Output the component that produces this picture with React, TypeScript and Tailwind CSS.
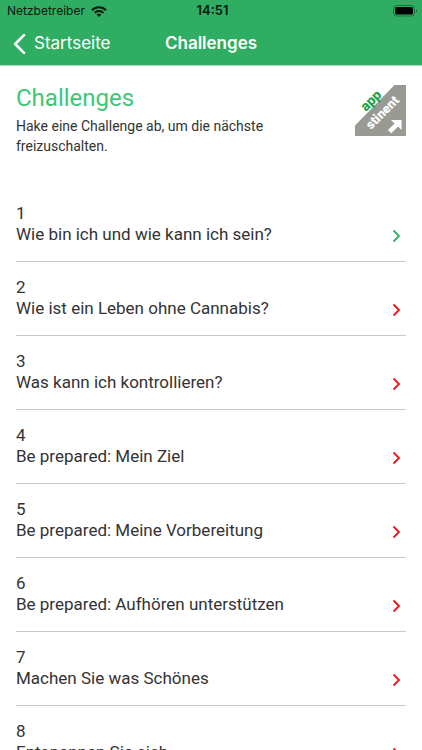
type Challenge = {
  id: number;
  title: string;
  unlocked?: boolean;
};

const challenges: Challenge[] = [
  { id: 1, title: 'Wie bin ich und wie kann ich sein?', unlocked: true },
  { id: 2, title: 'Wie ist ein Leben ohne Cannabis?' },
  { id: 3, title: 'Was kann ich kontrollieren?' },
  { id: 4, title: 'Be prepared: Mein Ziel' },
  { id: 5, title: 'Be prepared: Meine Vorbereitung' },
  { id: 6, title: 'Be prepared: Aufhören unterstützen' },
  { id: 7, title: 'Machen Sie was Schönes' },
  { id: 8, title: 'Entspannen Sie sich' },
];

const WifiIcon = () => (
  <svg className="h-[11px] w-[16px]" viewBox="0 0 16 11" fill="none" stroke="#06180c" strokeWidth="2">
    <path d="M1 4.2a10 10 0 0 1 14 0" />
    <path d="M3.6 6.9a6.2 6.2 0 0 1 8.8 0" />
    <path d="M8 11 5.6 8.6a3.4 3.4 0 0 1 4.8 0z" fill="#06180c" stroke="none" />
  </svg>
);

const BatteryIcon = () => (
  <svg className="h-[12px] w-[25px]" viewBox="0 0 25 12" role="img" aria-label="Akku voll">
    <rect x="0.5" y="0.5" width="21" height="10.5" rx="3" fill="none" stroke="#1d6e3d" />
    <rect x="2" y="2" width="18" height="7.5" rx="1.5" fill="#000" />
    <path d="M23 4a2 2 0 0 1 0 3.6z" fill="#1d6e3d" />
  </svg>
);

const StatusBar = () => (
  <div className="grid h-[22px] grid-cols-[1fr_auto_1fr] items-center pr-1 pl-[7px] font-['Inter','Liberation_Sans',sans-serif] text-[12px] text-[#06180c]">
    <div className="flex items-center gap-[6px]">
      <span>Netzbetreiber</span>
      <WifiIcon />
    </div>
    <span className="text-[13px] font-semibold">14:51</span>
    <div className="flex justify-end">
      <BatteryIcon />
    </div>
  </div>
);

const Logo = () => (
  <svg className="h-[51px] w-[51px] shrink-0" viewBox="0 0 51 51" role="img" aria-label="appstinent">
    <path d="M0 40.5 39.5 0H51v51H0z" fill="#9a9a94" />
    <g fontFamily="Roboto, 'Open Sans', sans-serif" fontWeight="900">
      <text x="11" y="27" fontSize="14" fill="#1fa650" transform="rotate(-45 11 27)">
        app
      </text>
      <text x="16" y="45" fontSize="13" fill="#fff" transform="rotate(-45 16 45)">
        stinent
      </text>
    </g>
    <path d="m33 45 3.2 3.2 6.9-6.8 3.5 3.6V35H36l3.7 3.5z" fill="#fff" />
  </svg>
);

const ChallengeRow = (props: Challenge) => (
  <li className="border-b border-[#c8c8c8]">
    <a href={`#challenge-${props.id}`} className="flex items-end justify-between pt-[15px] pb-4">
      <span className="flex flex-col text-[17px] leading-[21px]">
        <span>{props.id}</span>
        <span>{props.title}</span>
      </span>
      <svg
        className={`mr-[5px] mb-[2px] h-[14px] w-[9px] ${props.unlocked ? 'text-[#2fae63]' : 'text-[#f01414]'}`}
        viewBox="0 0 9 14"
        fill="none"
        stroke="currentColor"
        strokeWidth="1.8"
      >
        <path d="m1.5 1.5 5.5 5.5-5.5 5.5" />
      </svg>
    </a>
  </li>
);

const App = () => {
  return (
    <div className="flex h-screen flex-col bg-white font-['Roboto','Liberation_Sans',sans-serif] text-[#333]">
      <header className="shrink-0 border-b border-[#a5dcbb] bg-[#2fae63]">
        <StatusBar />
        <nav className="grid h-[43px] grid-cols-[1fr_auto_1fr] items-center px-3 font-['Inter','Liberation_Sans',sans-serif] text-[17px] text-white">
          <a href="#start" className="flex items-center gap-2">
            <svg className="h-[20px] w-[14px]" viewBox="0 0 14 20" fill="none" stroke="currentColor" strokeWidth="2.6">
              <path d="M12 1.2 3.2 10l8.8 8.8" strokeLinecap="round" strokeLinejoin="round" />
            </svg>
            Startseite
          </a>
          <span className="font-semibold">Challenges</span>
        </nav>
      </header>
      <main className="min-h-0 flex-1 overflow-y-auto px-4 pt-[19px] [scrollbar-width:none]">
        <div className="mb-8 flex items-start justify-between">
          <div className="w-[270px]">
            <h1 className="mb-1 text-[24px] leading-[27px] text-[#3cc878]">Challenges</h1>
            <p className="text-[14px] leading-[20px]">
              Hake eine Challenge ab, um die nächste freizuschalten.
            </p>
          </div>
          <Logo />
        </div>
        <ul>
          {challenges.map((challenge) => (
            <ChallengeRow key={challenge.id} {...challenge} />
          ))}
        </ul>
      </main>
    </div>
  );
};

export default App;
